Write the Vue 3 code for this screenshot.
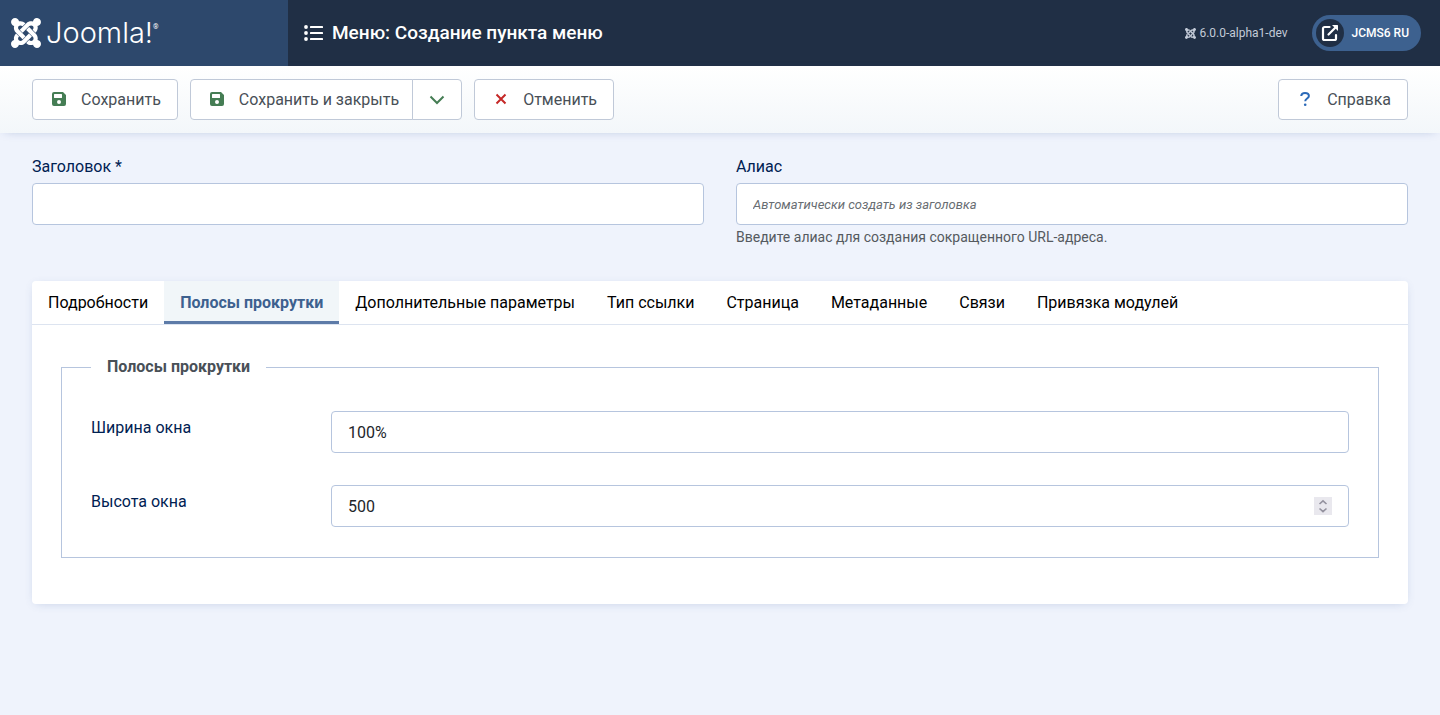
<script setup>
import { ref } from 'vue'

const joomla = 'M.6 92.1C.6 58.8 27.4 32 60.4 32c30 0 54.5 21.9 59.2 50.2 32.6-7.6 67.1.6 96.5 30l-44.3 44.3c-20.5-20.5-42.6-16.3-55.4-3.5-14.3 14.3-14.3 37.9 0 52.2l99.5 99.5-44 44.3c-87.7-87.2-49.7-49.7-99.8-99.7-26.8-26.5-35-64.8-24.8-98.9C20.4 144.6.6 120.7.6 92.1zm129.5 116.4l44.3 44.3c10-10 89.7-89.7 99.7-99.8 14.3-14.3 37.6-14.3 51.9 0 12.8 12.8 17 35-3.5 55.4l44 44.3c31.2-31.2 38.5-67.6 28.9-101.2 29.2-4.1 51.9-29.2 51.9-59.5 0-33.2-26.8-60.1-59.8-60.1-30.3 0-55.4 22.5-59.5 51.6-33.8-9.9-71.7-1.5-98.3 25.1-18.3 19.1-71.1 71.5-99.6 99.9zm266.3 152.2c8.2-32.7-.9-68.5-26.3-93.9-11.8-12.2 5 4.7-99.5-99.7l-44.3 44.3 99.7 99.7c14.3 14.3 14.3 37.6 0 51.9-12.8 12.8-35 17-55.4-3.5l-44 44.3c27.6 30.2 68 38.8 102.7 28 5.5 27.4 29.7 48.1 58.9 48.1 33 0 59.8-26.8 59.8-60.1 0-30.2-22.5-55-51.6-59.1zm-84.3-53.1l-44-44.3c-87 86.4-50.4 50.4-99.7 99.8-14.3 14.3-37.6 14.3-51.9 0-13.1-13.4-16.9-35.3 3.2-55.4l-44-44.3c-30.2 30.2-38 65.2-29.5 98.3-26.7 6-46.2 29.9-46.2 58.2C0 453.2 26.8 480 59.8 480c28.6 0 52.5-19.8 58.6-46.7 32.7 8.2 68.5-.6 94.2-26 32.1-32 12.2-12.4 99.5-99.7z'

const tabs = [
  'Подробности',
  'Полосы прокрутки',
  'Дополнительные параметры',
  'Тип ссылки',
  'Страница',
  'Метаданные',
  'Связи',
  'Привязка модулей',
]
const active = ref(1)
const title = ref('')
const alias = ref('')
const width = ref('100%')
const height = ref(500)
</script>

<template>
  <div class="page">
    <header class="header">
      <a href="#" class="brand" aria-label="Joomla!">
        <svg class="brand-mark" viewBox="0 32 448 448" aria-hidden="true"><path :d="joomla" /></svg>
        <span class="brand-name">Joomla!</span>
        <span class="brand-reg">®</span>
      </a>
      <h1 class="heading">
        <svg class="heading-icon" viewBox="0 0 20 16" aria-hidden="true">
          <circle cx="2" cy="2" r="1.9" /><circle cx="2" cy="8" r="1.9" /><circle cx="2" cy="14" r="1.9" />
          <rect x="6" y="1" width="13" height="2" rx=".6" /><rect x="6" y="7" width="13" height="2" rx=".6" /><rect x="6" y="13" width="13" height="2" rx=".6" />
        </svg>
        Меню: Создание пункта меню
      </h1>
      <div class="status">
        <span class="version">
          <svg viewBox="0 32 448 448" aria-hidden="true"><path :d="joomla" /></svg>
          6.0.0-alpha1-dev
        </span>
        <a href="#" class="site">
          <span class="site-icon">
            <svg viewBox="0 0 18 18" aria-hidden="true">
              <path d="M8.500 3H3.600A1.600 1.600 0 0 0 2 4.600V14.400A1.600 1.600 0 0 0 3.600 16H13.400A1.600 1.600 0 0 0 15 14.400V11M7.500 10.500 14 4" fill="none" stroke="#fff" stroke-width="2.2" stroke-linecap="round" />
              <path d="M11 1h5.400a.6.6 0 0 1 .6.6V7z" fill="#fff" />
            </svg>
          </span>
          JCMS6 RU
        </a>
      </div>
    </header>

    <div class="toolbar">
      <button type="button" class="btn">
        <svg class="ico save" viewBox="0 0 14 15" aria-hidden="true"><path fill-rule="evenodd" d="M2 0H11L14 3V12a2 2 0 0 1-2 2H2a2 2 0 0 1-2-2V2a2 2 0 0 1 2-2zM2.600 2a.6.6 0 0 0-.6.6V5.400a.6.6 0 0 0 .6.6H9.400a.6.6 0 0 0 .6-.6V2.600a.6.6 0 0 0-.6-.6zM7 8a2 2 0 1 0 0 4 2 2 0 0 0 0-4z" /></svg>
        Сохранить
      </button>
      <div class="group">
        <button type="button" class="btn main">
          <svg class="ico save" viewBox="0 0 14 15" aria-hidden="true"><path fill-rule="evenodd" d="M2 0H11L14 3V12a2 2 0 0 1-2 2H2a2 2 0 0 1-2-2V2a2 2 0 0 1 2-2zM2.600 2a.6.6 0 0 0-.6.6V5.400a.6.6 0 0 0 .6.6H9.400a.6.6 0 0 0 .6-.6V2.600a.6.6 0 0 0-.6-.6zM7 8a2 2 0 1 0 0 4 2 2 0 0 0 0-4z" /></svg>
          Сохранить и закрыть
        </button>
        <button type="button" class="btn toggle" aria-label="Другие варианты сохранения">
          <svg class="caret" viewBox="0 0 16 10" aria-hidden="true"><path d="M1.500 1.500 8 8 14.500 1.500" /></svg>
        </button>
      </div>
      <button type="button" class="btn">
        <svg class="ico cancel" viewBox="0 0 14 15" aria-hidden="true"><path d="M2.500 2.500 11.500 11.500M11.500 2.500 2.500 11.500" /></svg>
        Отменить
      </button>
      <button type="button" class="btn help">
        <svg class="ico question" viewBox="0 0 14 15" aria-hidden="true"><path d="M3.200 4C3.400 2 4.800 1 7 1s3.900 1.200 3.900 3c0 2.600-3.700 2.500-3.700 5.300" /><circle cx="7.200" cy="12.700" r="1.300" /></svg>
        Справка
      </button>
    </div>

    <main class="content">
      <div class="title-row">
        <div class="field">
          <label for="title">Заголовок *</label>
          <input id="title" v-model="title" type="text" class="control">
        </div>
        <div class="field">
          <label for="alias">Алиас</label>
          <input id="alias" v-model="alias" type="text" class="control" placeholder="Автоматически создать из заголовка" aria-describedby="alias-note">
          <div id="alias-note" class="note">Введите алиас для создания сокращенного URL-адреса.</div>
        </div>
      </div>

      <section class="card">
        <div class="tabs" role="tablist">
          <button
            v-for="(tab, i) in tabs"
            :key="tab"
            type="button"
            role="tab"
            class="tab"
            :class="{ active: i === active }"
            :aria-selected="i === active"
            @click="active = i"
          >{{ tab }}</button>
        </div>
        <div class="panel" role="tabpanel">
          <fieldset class="options">
            <legend>Полосы прокрутки</legend>
            <div class="row">
              <label for="width">Ширина окна</label>
              <input id="width" v-model="width" type="text" class="control">
            </div>
            <div class="row">
              <label for="height">Высота окна</label>
              <div class="control number">
                <input id="height" v-model="height" type="number">
                <svg class="spin" viewBox="0 0 18 18" aria-hidden="true"><path d="M5.500 7 9 3.800 12.500 7M5.500 11.500 9 14.700 12.500 11.500" /></svg>
              </div>
            </div>
          </fieldset>
        </div>
      </section>
    </main>
  </div>
</template>

<style>
body {
  background: #eff3fc;
}
</style>

<style scoped>
.page,
.page * {
  box-sizing: border-box;
}
.page {
  font-family: Roboto, "Noto Sans", sans-serif;
  font-size: 16px;
  line-height: 24px;
  color: #22262a;
}
button,
input {
  font: inherit;
}
.header {
  display: flex;
  align-items: center;
  min-height: 66px;
  background: #202f45;
  color: #fff;
}
.brand {
  display: flex;
  align-items: center;
  align-self: stretch;
  flex: none;
  width: 288px;
  padding-left: 11px;
  background: #2d486c;
  color: #fff;
  text-decoration: none;
}
.brand-mark {
  width: 30px;
  height: 30px;
  fill: #fff;
}
.brand-name {
  margin-left: 5px;
  font-family: Inter, sans-serif;
  font-weight: 300;
  font-size: 29px;
}
.brand-reg {
  align-self: flex-start;
  margin-top: 15px;
  font-size: 7px;
}
.heading {
  display: flex;
  align-items: center;
  gap: 8px;
  flex: 1;
  margin: 0;
  padding-left: 16px;
  font-size: 19px;
  font-weight: 500;
}
.heading-icon {
  width: 20px;
  height: 16px;
  fill: #fff;
}
.status {
  display: flex;
  align-items: center;
  gap: 24px;
  padding-right: 19px;
  font-size: 12px;
}
.version {
  display: flex;
  align-items: center;
  gap: 3px;
  color: #c3cbd8;
}
.version svg {
  width: 11px;
  height: 11px;
  fill: currentColor;
}
.site {
  display: flex;
  align-items: center;
  gap: 8px;
  padding: 4px 12px 4px 4px;
  border-radius: 18px;
  background: #3d618f;
  color: #fff;
  font-weight: 500;
  text-decoration: none;
}
.site-icon {
  display: grid;
  place-items: center;
  width: 28px;
  height: 28px;
  border-radius: 50%;
  background: #202f45;
}
.site-icon svg {
  width: 18px;
  height: 18px;
}
.toolbar {
  display: flex;
  gap: 12px;
  padding: 13px 32px;
  background: linear-gradient(#fff, #f3f7fa);
  box-shadow: 0 2px 10px -5px rgba(57, 91, 152, 0.4);
}
.btn {
  display: flex;
  align-items: center;
  height: 41px;
  padding: 0 16px;
  gap: 12px;
  border: 1px solid #c0c9d8;
  border-radius: 4px;
  background: #fff;
  color: #495057;
}
.group {
  display: flex;
}
.main {
  padding-right: 13px;
  border-radius: 4px 0 0 4px;
}
.toggle {
  width: 50px;
  margin-left: -1px;
  justify-content: center;
  border-radius: 0 4px 4px 0;
}
.help {
  margin-left: auto;
}
.ico {
  width: 20px;
  height: 15px;
  fill: #457d54;
}
.cancel {
  fill: none;
  stroke: #c52827;
  stroke-width: 2;
}
.question {
  fill: none;
  stroke: #2a69b8;
  stroke-width: 2;
}
.question circle {
  fill: #2a69b8;
  stroke: none;
}
.caret {
  width: 16px;
  height: 10px;
  fill: none;
  stroke: #457d54;
  stroke-width: 2;
}
.content {
  padding: 22px 32px 32px;
}
.title-row {
  display: grid;
  grid-template-columns: 1fr 1fr;
  gap: 32px;
  margin-bottom: 32px;
}
.field {
  display: flex;
  flex-direction: column;
}
label {
  color: #002152;
}
.field label {
  margin-bottom: 4px;
}
.control {
  width: 100%;
  min-width: 0;
  height: 42px;
  padding: 0 16px;
  border: 1px solid #b6c5de;
  border-radius: 4px;
  background: #fff;
  color: #22262a;
}
.control:placeholder-shown {
  font-size: 13px;
}
.control::placeholder {
  color: #686d72;
  font-style: italic;
  opacity: 1;
}
.note {
  color: #555a60;
  font-size: 14px;
}
.card {
  border-radius: 4px;
  background: #fff;
  box-shadow: 0 2px 10px -4px rgba(57, 91, 152, 0.3);
}
.tabs {
  display: flex;
  flex-wrap: wrap;
  border-bottom: 1px solid #dde4f0;
}
.tab {
  height: 43px;
  padding: 0 16px;
  border: 0;
  border-radius: 4px 0 0 0;
  background: transparent;
  color: #000;
}
.tab.active {
  border-radius: 0;
  background: #f1f6f9;
  box-shadow: inset 0 -3px #5d7ba8;
  color: #3d618f;
  font-weight: 700;
}
.panel {
  padding: 30px 29px 46px;
}
.options {
  min-width: 0;
  margin: 0;
  padding: 0 29px 30px;
  border: 1px solid #b6c5de;
}
legend {
  padding: 0 16px;
  color: #495057;
  font-weight: 700;
}
.row {
  display: grid;
  grid-template-columns: 240px 1fr;
  align-items: start;
  margin-top: 32px;
}
.row label {
  padding-top: 5px;
}
.number {
  display: flex;
  align-items: center;
}
.number input {
  flex: 1;
  min-width: 0;
  height: 100%;
  padding: 0;
  border: 0;
  outline: 0;
  background: transparent;
  color: inherit;
  appearance: textfield;
}
.number input::-webkit-inner-spin-button {
  appearance: none;
  margin: 0;
}
.spin {
  width: 18px;
  height: 18px;
  background: #e9e8ee;
  fill: none;
  stroke: #94929f;
  stroke-width: 1.6;
}
</style>
